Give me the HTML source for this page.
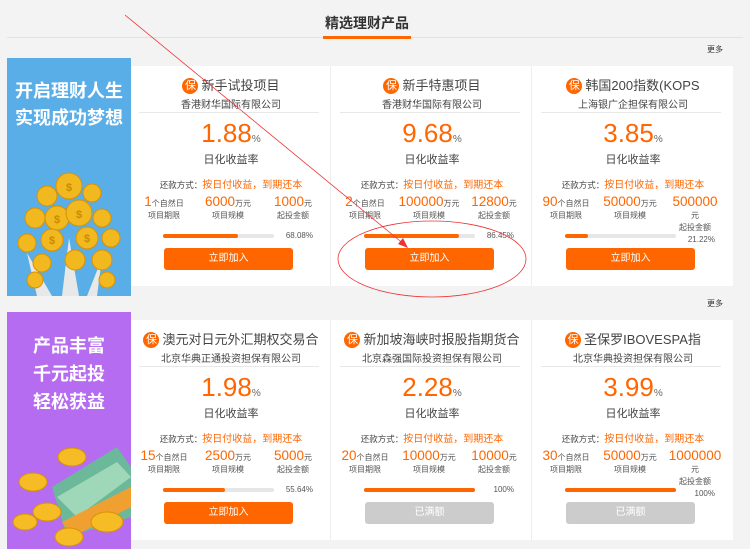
<!DOCTYPE html>
<html><head><meta charset="utf-8"><style>
*{margin:0;padding:0;box-sizing:border-box}
body{width:750px;height:549px;background:#f3f3f3;position:relative;overflow:hidden;font-family:"Liberation Sans","Noto Sans CJK SC",sans-serif;color:#333}
.abs{position:absolute}
.c{position:absolute;width:200px;height:220px;background:#fff}
.c>*{position:absolute}
.t{top:9px;left:0;width:200px;text-align:center;font-size:13px;white-space:nowrap;color:#444}
.t i{display:inline-block;width:16px;height:16px;border-radius:50%;background:#ff6600;color:#fff;font-style:normal;font-size:11px;line-height:16px;text-align:center;margin-right:3px;vertical-align:1px}
.co{top:30px;left:0;width:200px;text-align:center;font-size:10px;color:#444}
.dv{top:46px;left:8px;width:180px;height:1px;background:#e8e8e8}
.r{top:52px;left:0;width:200px;text-align:center;color:#ff6600;font-size:26px}
.r small{font-size:10px;color:#666}
.rl{top:85px;left:0;width:200px;text-align:center;font-size:11px;color:#444}
.pm{top:110px;left:0;width:200px;text-align:center;font-size:8.5px;color:#444}
.pm b{font-weight:normal;color:#ff6600;font-size:10px}
.col{top:128px;width:66px;text-align:center;font-size:8px;color:#555;line-height:12px}
.col b{font-weight:normal;font-size:13.5px;color:#ff6600;line-height:16px}
.col em{font-style:normal;font-size:8px;color:#555}
.bar{top:168px;left:32px;width:111px;height:4px;border-radius:2px;background:#e6e6e6}
.bar div{height:4px;border-radius:2px;background:#ff6600}
.pc{top:165px;left:146px;width:36px;text-align:right;font-size:8px;color:#555}
.btn{top:182px;left:33px;width:129px;height:22px;border-radius:3px;background:#ff6600;color:#fff;text-align:center;line-height:22px;font-size:10px}
.btn.g{background:#cccccc}
.more{font-size:8px;color:#333}
</style></head><body>
<div class="abs" style="left:7px;top:37px;width:736px;height:1px;background:#e2e2e2"></div>
<div class="abs" style="left:323px;top:13px;width:88px;text-align:center;font-size:14px;font-weight:bold;color:#333">精选理财产品</div>
<div class="abs" style="left:323px;top:36px;width:88px;height:3px;background:#ff6600"></div>

<div class="abs more" style="left:707px;top:44px">更多</div>
<div class="abs more" style="left:707px;top:298px">更多</div>

<div class="abs" style="left:7px;top:58px;width:124px;height:238px;background:#5aaee8;overflow:hidden">
 <div class="abs" style="left:0;top:20px;width:124px;text-align:center;color:#fff;font-size:18px;font-weight:bold;line-height:27px">开启理财人生<br>实现成功梦想</div>
 <svg class="abs" style="left:0;top:110px" width="124" height="128">
  <g fill="#e8e8e8"><path d="M55 128 L62 70 L72 128Z"/><path d="M30 128 L20 85 L45 128Z"/><path d="M80 128 L95 90 L90 128Z"/></g>
  <g fill="#f2b820" stroke="#d89200" stroke-width="1">
   <circle cx="62" cy="18" r="13"/><circle cx="40" cy="28" r="10"/><circle cx="85" cy="25" r="9"/>
   <circle cx="28" cy="50" r="10"/><circle cx="50" cy="50" r="12"/><circle cx="72" cy="45" r="13"/><circle cx="95" cy="50" r="9"/>
   <circle cx="20" cy="75" r="9"/><circle cx="45" cy="72" r="11"/><circle cx="80" cy="70" r="11"/><circle cx="104" cy="70" r="9"/>
   <circle cx="35" cy="95" r="9"/><circle cx="68" cy="92" r="10"/><circle cx="95" cy="92" r="10"/><circle cx="28" cy="112" r="8"/><circle cx="100" cy="112" r="8"/>
  </g>
  <g fill="#c98a00" font-size="11" font-weight="bold" text-anchor="middle" font-family="Liberation Sans"><text x="62" y="23">$</text><text x="50" y="55">$</text><text x="72" y="50">$</text><text x="45" y="76">$</text><text x="80" y="74">$</text></g>
 </svg>
</div>
<div class="abs" style="left:7px;top:312px;width:124px;height:237px;background:#b56cf0;overflow:hidden">
 <div class="abs" style="left:0;top:20px;width:124px;text-align:center;color:#fff;font-size:18px;font-weight:bold;line-height:28px">产品丰富<br>千元起投<br>轻松获益</div>
 <svg class="abs" style="left:0;top:115px" width="124" height="122">
  <path d="M45 60 L110 20 L124 40 L124 90 L60 110Z" fill="#6cb89a"/>
  <path d="M50 70 L110 35 L124 50 L70 90Z" fill="#9fd8b8"/>
  <path d="M55 95 L124 60 L124 80 L65 110Z" fill="#f0a030"/>
  <g fill="#f5bc25" stroke="#d89200"><ellipse cx="65" cy="30" rx="14" ry="9"/><ellipse cx="26" cy="55" rx="14" ry="9"/><ellipse cx="40" cy="85" rx="14" ry="9"/><ellipse cx="100" cy="95" rx="16" ry="10"/><ellipse cx="62" cy="110" rx="14" ry="9"/><ellipse cx="18" cy="95" rx="12" ry="8"/></g>
 </svg>
</div>

<div class="abs" style="left:131px;top:66px;width:601px;height:220px;background:#fff"></div>
<div class="abs" style="left:131px;top:320px;width:601px;height:220px;background:#fff"></div>

<div class="c" style="left:131px;top:66px">
 <div class="t"><i>保</i>新手试投项目</div><div class="co">香港财华国际有限公司</div><div class="dv"></div>
 <div class="r">1.88<small>%</small></div><div class="rl">日化收益率</div>
 <div class="pm">还款方式：<b>按日付收益，到期还本</b></div>
 <div class="col" style="left:0"><b>1</b><em>个自然日</em><br>项目期限</div>
 <div class="col" style="left:64px"><b>6000</b><em>万元</em><br>项目规模</div>
 <div class="col" style="left:129px"><b>1000</b><em>元</em><br>起投金额</div>
 <div class="bar"><div style="width:68%"></div></div><div class="pc">68.08%</div>
 <div class="btn">立即加入</div>
</div>
<div class="abs" style="left:330px;top:66px;width:1px;height:220px;background:#eee"></div>
<div class="c" style="left:332px;top:66px">
 <div class="t"><i>保</i>新手特惠项目</div><div class="co">香港财华国际有限公司</div><div class="dv"></div>
 <div class="r">9.68<small>%</small></div><div class="rl">日化收益率</div>
 <div class="pm">还款方式：<b>按日付收益，到期还本</b></div>
 <div class="col" style="left:0"><b>2</b><em>个自然日</em><br>项目期限</div>
 <div class="col" style="left:64px"><b>100000</b><em>万元</em><br>项目规模</div>
 <div class="col" style="left:129px"><b>12800</b><em>元</em><br>起投金额</div>
 <div class="bar"><div style="width:86%"></div></div><div class="pc">86.45%</div>
 <div class="btn">立即加入</div>
</div>
<div class="abs" style="left:531px;top:66px;width:1px;height:220px;background:#eee"></div>
<div class="c" style="left:533px;top:66px">
 <div class="t"><i>保</i>韩国200指数(KOPS</div><div class="co">上海银广企担保有限公司</div><div class="dv"></div>
 <div class="r">3.85<small>%</small></div><div class="rl">日化收益率</div>
 <div class="pm">还款方式：<b>按日付收益，到期还本</b></div>
 <div class="col" style="left:0"><b>90</b><em>个自然日</em><br>项目期限</div>
 <div class="col" style="left:64px"><b>50000</b><em>万元</em><br>项目规模</div>
 <div class="col" style="left:129px;width:66px"><b>500000</b><br>元<br>起投金额</div>
 <div class="bar"><div style="width:21%"></div></div><div class="pc" style="top:169px">21.22%</div>
 <div class="btn">立即加入</div>
</div>

<div class="c" style="left:131px;top:320px">
 <div class="t"><i>保</i>澳元对日元外汇期权交易合</div><div class="co">北京华典正通投资担保有限公司</div><div class="dv"></div>
 <div class="r">1.98<small>%</small></div><div class="rl">日化收益率</div>
 <div class="pm">还款方式：<b>按日付收益，到期还本</b></div>
 <div class="col" style="left:0"><b>15</b><em>个自然日</em><br>项目期限</div>
 <div class="col" style="left:64px"><b>2500</b><em>万元</em><br>项目规模</div>
 <div class="col" style="left:129px"><b>5000</b><em>元</em><br>起投金额</div>
 <div class="bar"><div style="width:56%"></div></div><div class="pc">55.64%</div>
 <div class="btn">立即加入</div>
</div>
<div class="abs" style="left:330px;top:320px;width:1px;height:220px;background:#eee"></div>
<div class="c" style="left:332px;top:320px">
 <div class="t"><i>保</i>新加坡海峡时报股指期货合</div><div class="co">北京森强国际投资担保有限公司</div><div class="dv"></div>
 <div class="r">2.28<small>%</small></div><div class="rl">日化收益率</div>
 <div class="pm">还款方式：<b>按日付收益，到期还本</b></div>
 <div class="col" style="left:0"><b>20</b><em>个自然日</em><br>项目期限</div>
 <div class="col" style="left:64px"><b>10000</b><em>万元</em><br>项目规模</div>
 <div class="col" style="left:129px"><b>10000</b><em>元</em><br>起投金额</div>
 <div class="bar"><div style="width:100%"></div></div><div class="pc">100%</div>
 <div class="btn g">已满额</div>
</div>
<div class="abs" style="left:531px;top:320px;width:1px;height:220px;background:#eee"></div>
<div class="c" style="left:533px;top:320px">
 <div class="t"><i>保</i>圣保罗IBOVESPA指</div><div class="co">北京华典投资担保有限公司</div><div class="dv"></div>
 <div class="r">3.99<small>%</small></div><div class="rl">日化收益率</div>
 <div class="pm">还款方式：<b>按日付收益，到期还本</b></div>
 <div class="col" style="left:0"><b>30</b><em>个自然日</em><br>项目期限</div>
 <div class="col" style="left:64px"><b>50000</b><em>万元</em><br>项目规模</div>
 <div class="col" style="left:129px;width:66px"><b>1000000</b><br>元<br>起投金额</div>
 <div class="bar"><div style="width:100%"></div></div><div class="pc" style="top:169px">100%</div>
 <div class="btn g">已满额</div>
</div>

<svg class="abs" style="left:0;top:0" width="750" height="549">
 <line x1="125" y1="15" x2="405" y2="245" stroke="#e33" stroke-width="0.8"/>
 <path d="M408 248 L398 244 L403 238Z" fill="#e33"/>
 <ellipse cx="432" cy="259" rx="94" ry="38" fill="none" stroke="#e33" stroke-width="0.8"/>
</svg>
</body></html>
